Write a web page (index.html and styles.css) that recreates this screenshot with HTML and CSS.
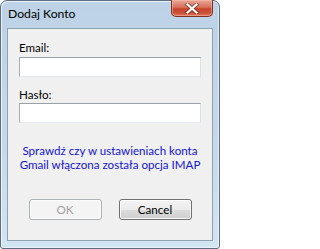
FILE: index.html
```html
<!DOCTYPE html>
<html lang="pl">
<head>
<meta charset="utf-8">
<title>Dodaj Konto</title>
<link rel="stylesheet" href="styles.css">
</head>
<body>
<div class="window">
  <div class="titlebar">
    <span class="title">Dodaj Konto</span>
    <div class="close">
      <svg width="16" height="11" viewBox="0 0 16 11" aria-hidden="true">
        <path d="M3.5 1.5 L12.5 9.5 M12.5 1.5 L3.5 9.5" stroke="#5a2018" stroke-width="4" stroke-linecap="square" fill="none" opacity="0.6"/>
        <path d="M3.5 1.5 L12.5 9.5 M12.5 1.5 L3.5 9.5" stroke="#ffffff" stroke-width="2.2" stroke-linecap="square" fill="none"/>
      </svg>
    </div>
  </div>
  <div class="client">
    <label class="label label-first">Email:</label>
    <div class="input"></div>
    <label class="label label-second">Hasło:</label>
    <div class="input"></div>
    <p class="note">Sprawdź czy w ustawieniach konta<br>Gmail włączona została opcja IMAP</p>
    <div class="buttons">
      <div class="btn btn-disabled">OK</div>
      <div class="btn">Cancel</div>
    </div>
  </div>
</div>
</body>
</html>
```
FILE: styles.css
```css
html, body {
  margin: 0;
  padding: 0;
  background: #ffffff;
}
body {
  width: 220px;
  height: 249px;
  overflow: hidden;
  font-family: "Lato", "Liberation Sans", sans-serif;
  font-size: 11.6px;
  font-weight: 400;
}
.window {
  box-sizing: border-box;
  width: 220px;
  height: 249px;
  border: 1px solid #5b6e82;
  border-radius: 7px 7px 3px 3px;
  background: linear-gradient(to bottom, #bdd2e6 0%, #c6d9ea 60%, #d3e5f2 100%);
  box-shadow: inset 1px 1px 0 rgba(255,255,255,0.7), inset -1px -1px 0 rgba(255,255,255,0.5);
  padding: 0 6px 7px 6px;
  display: flex;
  flex-direction: column;
}
.titlebar {
  height: 27px;
  display: flex;
  justify-content: space-between;
  align-items: flex-start;
  flex-shrink: 0;
}
.title {
  padding: 5px 0 0 1px;
  line-height: 15px;
  font-size: 12.2px;
  color: #000000;
}
.close {
  box-sizing: border-box;
  width: 42px;
  height: 17px;
  margin-top: -1px;
  border: 1px solid #7e3224;
  border-top: none;
  border-radius: 0 0 5px 5px;
  background: linear-gradient(to bottom, #e9a898 0%, #d8705c 45%, #c9442c 55%, #c9503a 80%, #dc7a5e 100%);
  box-shadow: inset 0 0 0 1px rgba(255,200,180,0.45);
  display: flex;
  align-items: center;
  justify-content: center;
}
.close svg {
  display: block;
}
.client {
  flex: 1;
  border: 1px solid #8ea2b5;
  background: #f0f0f0;
  padding: 12px 11px 0 11px;
  display: flex;
  flex-direction: column;
  color: #000000;
}
.label {
  display: block;
  line-height: 14px;
  height: 14px;
  margin-bottom: 2px;
}
.label-second {
  margin-top: 11px;
  margin-bottom: 1px;
}
.input {
  box-sizing: border-box;
  width: 182px;
  height: 20px;
  background: #ffffff;
  border: 1px solid #abadb3;
  border-top-color: #9aa0a8;
  border-bottom-color: #e3e9ef;
  border-right-color: #dbdfe6;
}
.note {
  margin: 21px -11px 0 -11px;
  text-align: center;
  white-space: nowrap;
  line-height: 14px;
  color: #1414d2;
}
.buttons {
  margin-top: 27px;
  display: flex;
  justify-content: center;
  gap: 17px;
  margin-left: -11px;
  margin-right: -11px;
}
.btn {
  box-sizing: border-box;
  width: 73px;
  height: 21px;
  border: 1px solid #707070;
  border-radius: 3px;
  background: linear-gradient(to bottom, #f3f3f3 0%, #ebebeb 50%, #dddddd 51%, #cfcfcf 100%);
  box-shadow: inset 0 0 0 1px rgba(255,255,255,0.8);
  display: flex;
  align-items: center;
  justify-content: center;
  line-height: 14px;
  color: #000000;
}
.btn-disabled {
  border-color: #adb2b5;
  background: #f4f4f4;
  color: #a0a0a0;
}
```
